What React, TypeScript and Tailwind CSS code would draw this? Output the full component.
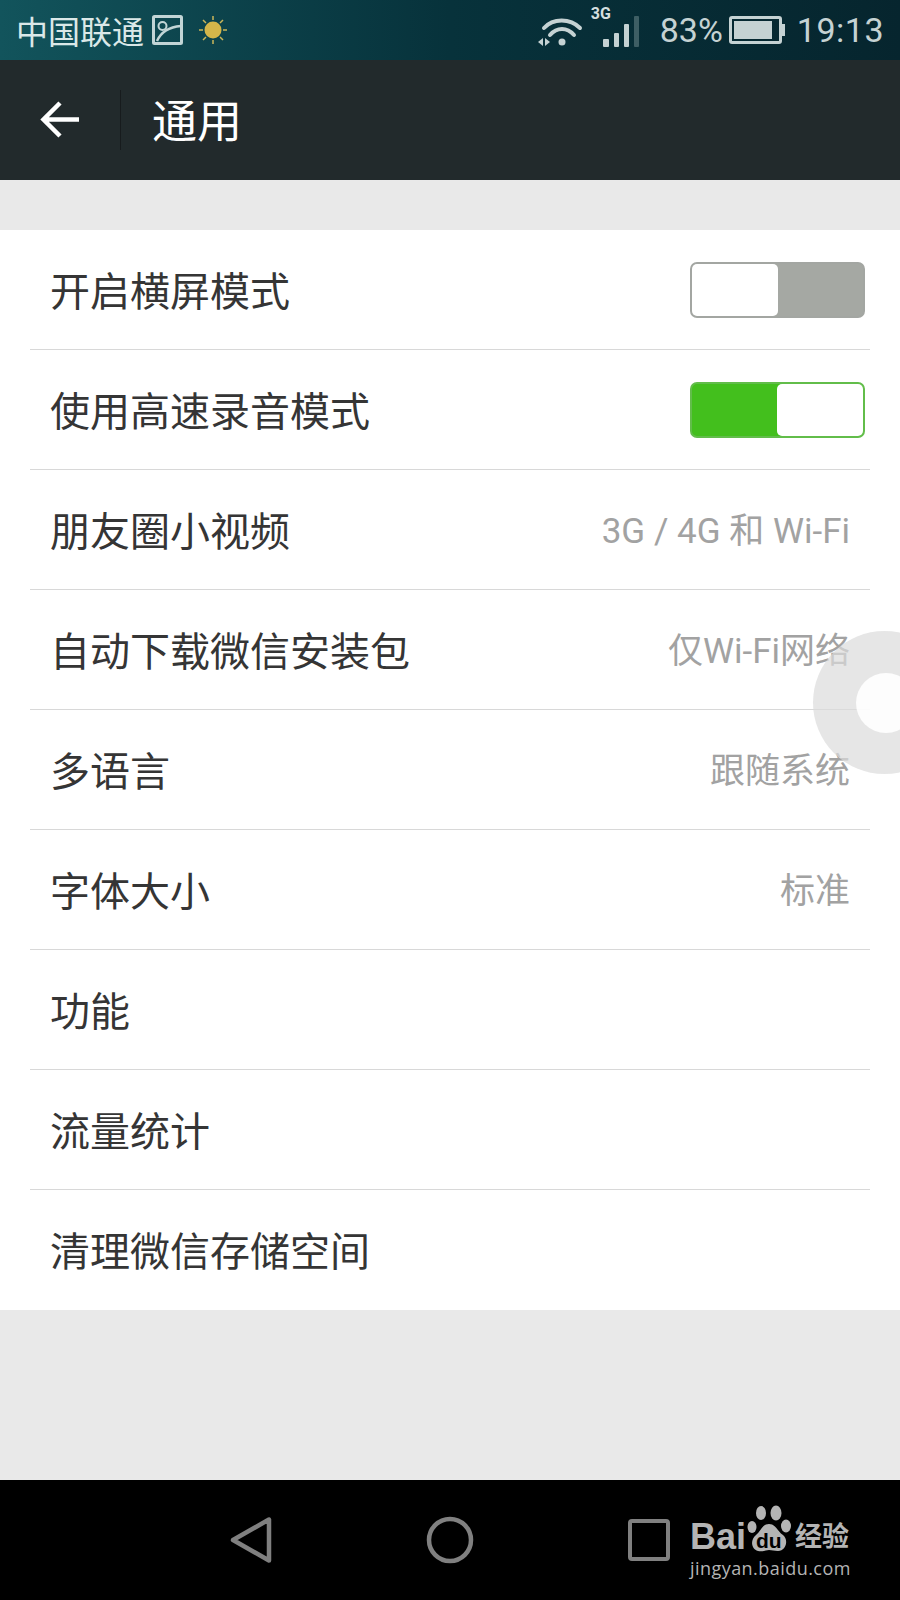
const rows = [
  { label: "开启横屏模式", toggle: "off" },
  { label: "使用高速录音模式", toggle: "on" },
  { label: "朋友圈小视频", value: "3G / 4G 和 Wi-Fi" },
  { label: "自动下载微信安装包", value: "仅Wi-Fi网络" },
  { label: "多语言", value: "跟随系统" },
  { label: "字体大小", value: "标准" },
  { label: "功能" },
  { label: "流量统计" },
  { label: "清理微信存储空间" },
];

function StatusBar() {
  return (
    <div className="h-[60px] flex items-center justify-between bg-gradient-to-r from-[#12545c] via-[#07323b] to-[#06252e] pl-[16px] pr-[16px]">
      <div className="flex items-center">
        <span className="text-[32px] leading-none text-[#dbe8e8] font-['Noto_Sans_CJK_SC',sans-serif]">中国联通</span>
        <svg width="32" height="30" viewBox="0 0 32 30" fill="none" className="ml-[8px]">
          <rect x="1.5" y="1.5" width="28" height="27" rx="1" stroke="#c2d5d6" strokeWidth="3" />
          <circle cx="10.5" cy="11" r="4" stroke="#c2d5d6" strokeWidth="2" />
          <path d="M5 26C9 17 18 12 29 11" stroke="#c2d5d6" strokeWidth="2.5" />
        </svg>
        <svg width="30" height="30" viewBox="0 0 30 30" className="ml-[14px]">
          <circle cx="15" cy="15" r="8.5" fill="#d4b64a" />
          <path d="M15 1v4M15 25v4M1 15h4M25 15h4M5 5l3 3M22 22l3 3M25 5l-3 3M8 22l-3 3" stroke="#c9b65a" strokeWidth="1.5" />
        </svg>
      </div>
      <div className="flex items-center text-[#c5d2d3]">
        <svg width="46" height="32" viewBox="0 0 46 32" fill="none" className="mt-[1px]">
          <path d="M7 13C16 3 33 3 43 13" stroke="#c5d2d3" strokeWidth="4" strokeLinecap="round" />
          <path d="M13 20C20 12 30 12 37 20" stroke="#c5d2d3" strokeWidth="4" strokeLinecap="round" />
          <circle cx="25" cy="27" r="3.5" fill="#c5d2d3" />
          <path d="M6 23v8l-5-4zM8 23v8l5-4z" fill="#c5d2d3" />
        </svg>
        <div className="relative w-[48px] h-[34px] ml-[8px]">
          <span className="absolute left-0 top-[-7px] text-[16px] leading-none font-bold font-['Roboto',sans-serif] text-[#d5dfdf]">3G</span>
          <div className="absolute left-[12px] bottom-0 flex items-end gap-[5px]">
            <div className="w-[6px] h-[8px] rounded-[1px] bg-[#c5d2d3]" />
            <div className="w-[5px] h-[14px] rounded-[1px] bg-[#c5d2d3]" />
            <div className="w-[5px] h-[23px] rounded-[1px] bg-[#c5d2d3]" />
            <div className="w-[5px] h-[31px] rounded-[1px] bg-[#3e5e64]" />
          </div>
        </div>
        <span className="ml-[21px] text-[34px] leading-none font-['Roboto',sans-serif]">83%</span>
        <div className="ml-[6px] flex items-center">
          <div className="w-[53px] h-[28px] border-[3px] border-[#c5d2d3] rounded-[3px] p-[2px] flex">
            <div className="w-[38px] bg-[#c5d2d3]" />
          </div>
          <div className="w-[3px] h-[12px] bg-[#c5d2d3]" />
        </div>
        <span className="ml-[12px] text-[34px] leading-none tracking-[0.5px] font-['Roboto',sans-serif]">19:13</span>
      </div>
    </div>
  );
}

function Toggle({ on }: { on: boolean }) {
  if (on) {
    return (
      <div className="w-[175px] h-[56px] rounded-[7px] border-2 border-[#62bd4a] bg-[#43bf1d] flex justify-end">
        <div className="w-[86px] h-full rounded-[5px] bg-white" />
      </div>
    );
  }
  return (
    <div className="w-[175px] h-[56px] rounded-[7px] border-2 border-[#a3a6a2] bg-[#a5a8a3] flex">
      <div className="w-[86px] h-full rounded-[5px] bg-white" />
    </div>
  );
}

function Row({ label, value, toggle, last }: { label: string; value?: string; toggle?: string; last: boolean }) {
  return (
    <div className={`mx-[30px] h-[120px] flex items-center justify-between pl-[20px] ${last ? "" : "border-b border-[#d8d8d8]"} ${toggle ? "pr-[5px]" : "pr-[20px]"}`}>
      <span className="text-[40px] leading-none text-[#353535] pt-[6px]">{label}</span>
      {value && <span className="text-[35px] leading-none text-[#a2a2a2] pt-[4px]">{value}</span>}
      {toggle && <Toggle on={toggle === "on"} />}
    </div>
  );
}

function BaiduMark() {
  return (
    <div className="absolute left-[690px] top-[1504px] w-[170px] text-[#b4b4b4]">
      <div className="flex items-end h-[50px]">
        <span className="text-[36px] leading-[34px] font-bold font-['Liberation_Sans',sans-serif]">Bai</span>
        <div className="relative w-[48px] h-[50px] ml-[1px]">
          <svg width="48" height="50" viewBox="0 0 48 50" className="absolute inset-0">
            <ellipse cx="14" cy="9" rx="5" ry="7" fill="#b4b4b4" />
            <ellipse cx="29" cy="9" rx="5.5" ry="7.5" fill="#b4b4b4" />
            <ellipse cx="5" cy="23" rx="4.5" ry="6" fill="#b4b4b4" />
            <ellipse cx="39" cy="22" rx="5" ry="6.5" fill="#b4b4b4" />
            <path d="M22 20C29 20 30 27 36 31C42 36 39 47 31 47C27 47 25 46 22 46C19 46 16 48 11 47C4 45 3 36 9 31C14 27 15 20 22 20Z" fill="#b4b4b4" />
          </svg>
          <span className="absolute left-[9px] top-[26px] text-[21px] leading-none font-bold text-black font-['Liberation_Sans',sans-serif]">du</span>
        </div>
        <span className="text-[27px] leading-[34px] font-bold whitespace-nowrap">经验</span>
      </div>
      <div className="text-[18px] leading-none tracking-[0.45px] whitespace-nowrap mt-[5px] font-['Open_Sans',sans-serif]">jingyan.baidu.com</div>
    </div>
  );
}

function NavBar() {
  return (
    <div className="h-[120px] bg-black flex items-center pl-[229px]">
      <svg width="44" height="48" viewBox="0 0 44 48" fill="none">
        <path d="M4 24L40 3.5V44.5Z" stroke="#808080" strokeWidth="4.5" strokeLinejoin="round" />
      </svg>
      <svg width="48" height="48" viewBox="0 0 48 48" fill="none" className="ml-[153px]">
        <circle cx="24" cy="24" r="21" stroke="#808080" strokeWidth="4.5" />
      </svg>
      <div className="ml-[154px] w-[42px] h-[42px] rounded-[4px] border-[4px] border-[#808080]" />
    </div>
  );
}

export default function App() {
  return (
    <div className="relative w-[900px] h-[1600px] flex flex-col overflow-hidden bg-[#e9e9e9] font-['Roboto','Noto_Sans_CJK_SC',sans-serif]">
      <StatusBar />
      <div className="h-[120px] bg-[#222a2c] flex items-center">
        <div className="w-[121px] h-[60px] flex items-center justify-center border-r border-[#171b1d]">
          <svg width="44" height="44" viewBox="0 0 44 44" fill="none">
            <path d="M41 21.5H6M22 5L5.5 21.5L22 38" stroke="white" strokeWidth="4.5" />
          </svg>
        </div>
        <span className="ml-[31px] text-[45px] leading-none text-white pt-[4px]">通用</span>
      </div>
      <div className="flex-1 pt-[50px]">
        <div className="bg-white">
          {rows.map((r, i) => (
            <Row key={r.label} label={r.label} value={r.value} toggle={r.toggle} last={i === rows.length - 1} />
          ))}
        </div>
      </div>
      <NavBar />
      <BaiduMark />
      {/* floating assistive ball */}
      <div className="absolute left-[813px] top-[631px] w-[143px] h-[143px] rounded-full bg-[#dcdcdc]/70 flex items-center justify-center">
        <div className="w-[60px] h-[60px] rounded-full bg-white/90 ml-[2px]" />
      </div>
    </div>
  );
}
